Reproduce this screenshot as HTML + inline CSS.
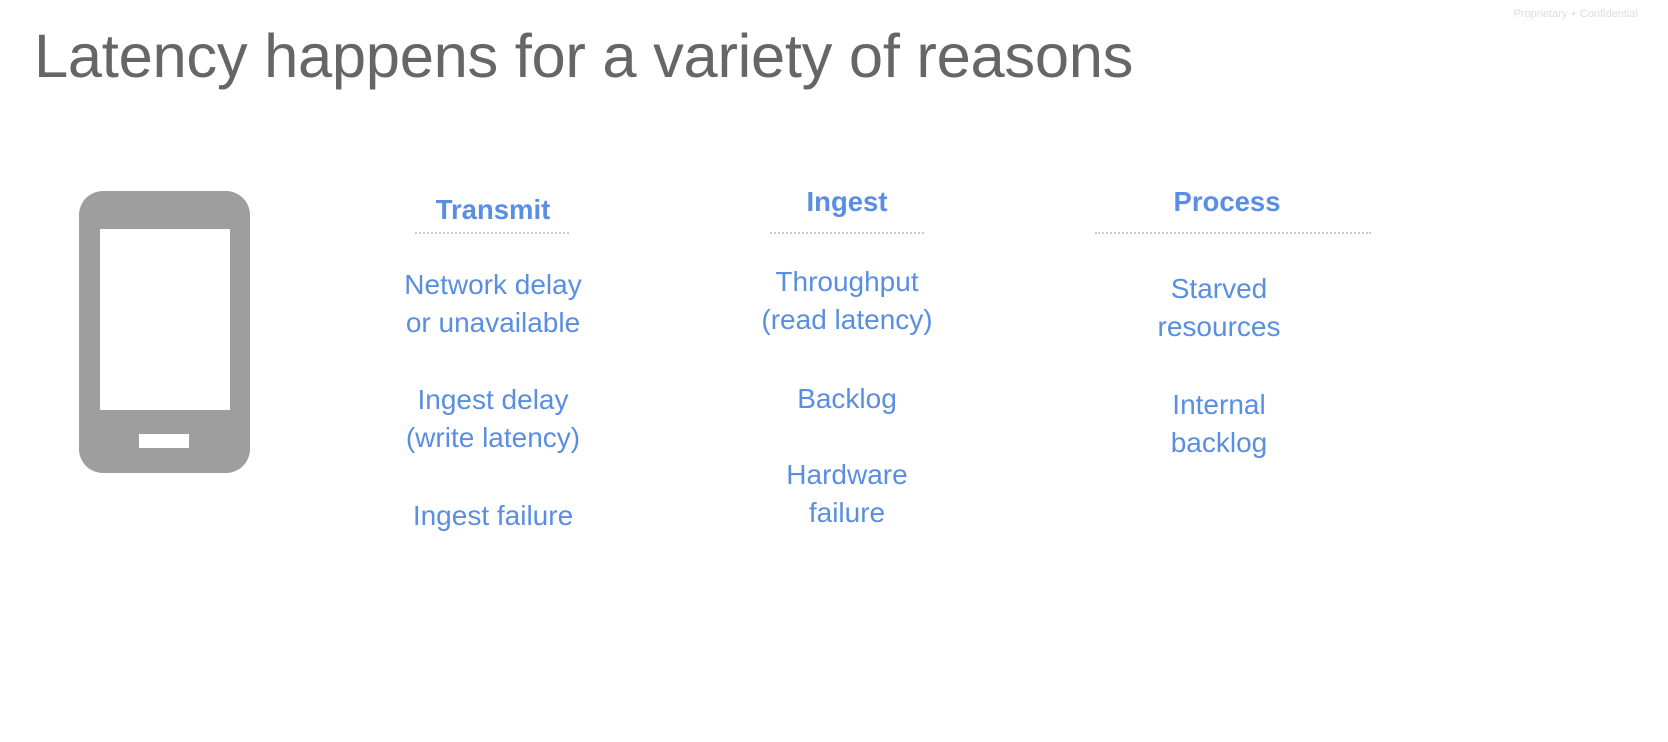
<!DOCTYPE html>
<html><head><style>
body{margin:0;width:1668px;height:742px;background:#fff;position:relative;overflow:hidden;font-family:"Liberation Sans",sans-serif}
.t{position:absolute;left:34px;top:21px;font-size:61.5px;color:#666;white-space:nowrap;letter-spacing:-0.3px}
.c{position:absolute;width:360px;margin-left:-180px;text-align:center;color:#5a8ee2;font-size:28px;line-height:38px;white-space:nowrap}
.h{font-weight:bold;font-size:27.5px;color:#5a8ee2}
.d{position:absolute;height:0;border-top:2px dotted #ccc}
.pc{position:absolute;right:30px;top:8px;font-size:11px;color:#ddd}
</style></head><body>
<div class="pc">Proprietary + Confidential</div>
<div class="t">Latency happens for a variety of reasons</div>
<div style="position:absolute;left:79px;top:191px;width:171px;height:282px;background:#9e9e9e;border-radius:24px"></div>
<div style="position:absolute;left:100px;top:229px;width:130px;height:181px;background:#fff"></div>
<div style="position:absolute;left:139px;top:434px;width:50px;height:14px;background:#fff"></div>

<div class="c h" style="left:493px;top:191px">Transmit</div>
<div class="d" style="left:415px;width:154px;top:232px"></div>
<div class="c" style="left:493px;top:266px">Network delay<br>or unavailable</div>
<div class="c" style="left:493px;top:381px">Ingest delay<br>(write latency)</div>
<div class="c" style="left:493px;top:497px">Ingest failure</div>

<div class="c h" style="left:847px;top:183px">Ingest</div>
<div class="d" style="left:770px;width:154px;top:232px"></div>
<div class="c" style="left:847px;top:263px">Throughput<br>(read latency)</div>
<div class="c" style="left:847px;top:380px">Backlog</div>
<div class="c" style="left:847px;top:456px">Hardware<br>failure</div>

<div class="c h" style="left:1227px;top:183px">Process</div>
<div class="d" style="left:1095px;width:276px;top:232px"></div>
<div class="c" style="left:1219px;top:270px">Starved<br>resources</div>
<div class="c" style="left:1219px;top:386px">Internal<br>backlog</div>
</body></html>
